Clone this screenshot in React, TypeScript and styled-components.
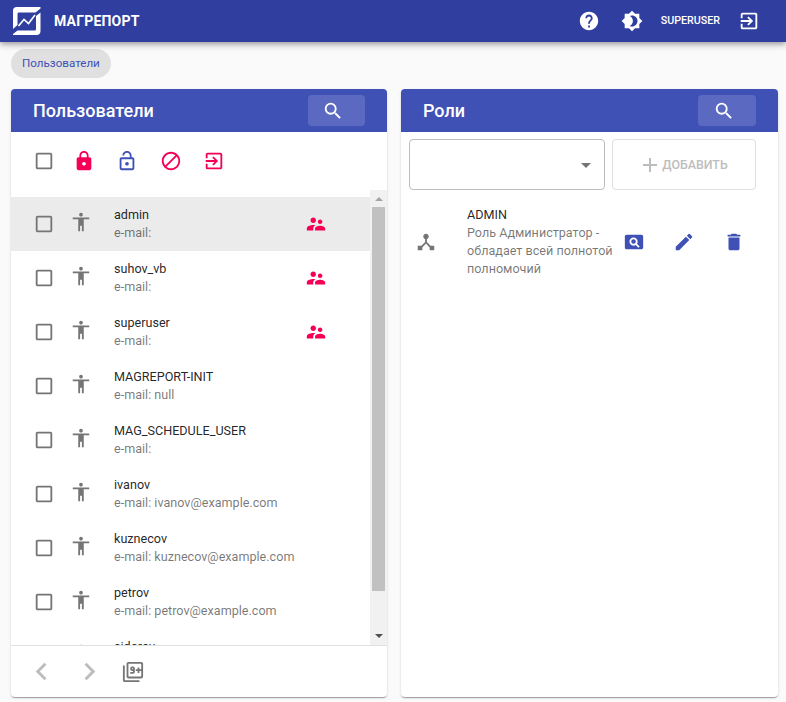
import React from "react";
import styled, { createGlobalStyle } from "styled-components";
import {
  MdAccessibility,
  MdAdd,
  MdArrowDropDown,
  MdBlock,
  MdBrightness4,
  MdCheckBoxOutlineBlank,
  MdDelete,
  MdDeviceHub,
  MdEdit,
  MdExitToApp,
  MdFilter9Plus,
  MdHelp,
  MdLock,
  MdLockOpen,
  MdNavigateBefore,
  MdNavigateNext,
  MdPageview,
  MdSearch,
  MdSupervisorAccount,
} from "react-icons/md";

const users = [
  { name: "admin", email: "", supervisor: true, selected: true },
  { name: "suhov_vb", email: "", supervisor: true },
  { name: "superuser", email: "", supervisor: true },
  { name: "MAGREPORT-INIT", email: "null" },
  { name: "MAG_SCHEDULE_USER", email: "" },
  { name: "ivanov", email: "ivanov@example.com" },
  { name: "kuznecov", email: "kuznecov@example.com" },
  { name: "petrov", email: "petrov@example.com" },
  { name: "sidorov", email: "sidorov@example.com" },
];

export default function App() {
  return (
    <Page>
      <GlobalStyle />
      <AppBar>
        <Logo viewBox="0 0 28 28" fill="none">
          <path d="M0 3.5C0 1.5 1.5 0 3.5 0H27.5V1.5L22.5 5.5H6C5 5.5 4.5 6 4.5 7V18L0 22Z" fill="#fff" />
          <path d="M0 28V27L4.5 23.5H21.5C22.5 23.5 23 23 23 22V9L27.5 5.5V24C27.5 26.5 26 28 23.5 28Z" fill="#fff" />
          <path d="M5.5 19L11 12.5L15.5 16.5L22 8" stroke="#fff" strokeWidth="1.6" />
        </Logo>
        <Brand>МАГРЕПОРТ</Brand>
        <Spacer />
        <BarIcons>
          <MdHelp size={22} />
          <MdBrightness4 size={22} />
          <UserName>SUPERUSER</UserName>
          <MdExitToApp size={22} />
        </BarIcons>
      </AppBar>

      <Crumbs>
        <Chip>Пользователи</Chip>
      </Crumbs>

      <Columns>
        <Panel>
          <PanelHead>
            <PanelTitle>Пользователи</PanelTitle>
            <SearchButton $width={57}>
              <MdSearch size={22} />
            </SearchButton>
          </PanelHead>
          <Toolbar>
            <SelectAll $color="#757575"><MdCheckBoxOutlineBlank size={22} /></SelectAll>
            <Tool $color="#f50057"><MdLock size={22} /></Tool>
            <Tool $color="#3f51b5"><MdLockOpen size={22} /></Tool>
            <Tool $color="#f50057"><MdBlock size={22} /></Tool>
            <Tool $color="#f50057"><MdExitToApp size={22} /></Tool>
          </Toolbar>
          <ListArea>
            <UserList>
              {users.map((user) => (
                <UserRow key={user.name} $selected={user.selected}>
                  <CheckCell><MdCheckBoxOutlineBlank size={22} /></CheckCell>
                  <PersonCell><MdAccessibility size={22} /></PersonCell>
                  <UserText>
                    <Primary>{user.name}</Primary>
                    <Secondary>e-mail: {user.email}</Secondary>
                  </UserText>
                  {user.supervisor && (
                    <RoleMark><MdSupervisorAccount size={22} /></RoleMark>
                  )}
                </UserRow>
              ))}
            </UserList>
            <ScrollBar>
              <ArrowUp />
              <ScrollTrack>
                <ScrollThumb />
              </ScrollTrack>
              <ArrowDown />
            </ScrollBar>
          </ListArea>
          <Footer>
            <Pager><MdNavigateBefore size={35} /></Pager>
            <Pager><MdNavigateNext size={35} /></Pager>
            <PageSize><MdFilter9Plus size={22} /></PageSize>
          </Footer>
        </Panel>

        <Panel>
          <PanelHead>
            <PanelTitle>Роли</PanelTitle>
            <SearchButton $width={58}>
              <MdSearch size={22} />
            </SearchButton>
          </PanelHead>
          <RoleForm>
            <RoleSelect>
              <MdArrowDropDown size={24} />
            </RoleSelect>
            <AddButton>
              <MdAdd size={24} />
              ДОБАВИТЬ
            </AddButton>
          </RoleForm>
          <RoleRow>
            <RoleIcon><MdDeviceHub size={22} /></RoleIcon>
            <RoleText>
              <Primary>ADMIN</Primary>
              <Secondary>Роль Администратор - обладает всей полнотой полномочий</Secondary>
            </RoleText>
            <RoleActions>
              <MdPageview size={22} />
              <MdEdit size={22} />
              <MdDelete size={22} />
            </RoleActions>
          </RoleRow>
        </Panel>
      </Columns>
    </Page>
  );
}

const GlobalStyle = createGlobalStyle`
  html, body {
    margin: 0;
    height: 100%;
    background: #fafafa;
    font-family: Roboto, "Liberation Sans", sans-serif;
  }
  svg {
    display: block;
  }
`;

const Page = styled.div`
  width: 786px;
  height: 702px;
  display: flex;
  flex-direction: column;
  overflow: hidden;
`;

const AppBar = styled.header`
  height: 42px;
  flex: none;
  display: flex;
  align-items: center;
  padding: 0 26px 0 13px;
  background: #303f9f;
  color: #fff;
  box-shadow: 0 2px 4px -1px rgba(0, 0, 0, 0.2), 0 4px 5px 0 rgba(0, 0, 0, 0.14),
    0 1px 10px 0 rgba(0, 0, 0, 0.12);
  position: relative;
  z-index: 1;
`;

const Logo = styled.svg`
  width: 28px;
  height: 28px;
  margin-right: 13px;
`;

const Brand = styled.div`
  font-size: 14px;
  font-weight: 700;
  letter-spacing: 0.2px;
`;

const Spacer = styled.div`
  flex: 1;
`;

const BarIcons = styled.div`
  display: flex;
  align-items: center;
  gap: 21px;
`;

const UserName = styled.span`
  font-size: 10.7px;
  font-weight: 500;
  margin: 0 -3px 2px -3px;
`;

const Crumbs = styled.nav`
  height: 40px;
  flex: none;
  display: flex;
  align-items: flex-start;
  padding: 7px 11px 0;
`;

const Chip = styled.div`
  height: 29px;
  box-sizing: border-box;
  display: flex;
  align-items: center;
  padding: 0 11px 2px;
  border-radius: 15px;
  background: #e0e0e0;
  color: #3f51b5;
  font-size: 11.6px;
`;

const Columns = styled.main`
  flex: 1;
  min-height: 0;
  display: grid;
  grid-template-columns: 376px 377px;
  gap: 14px;
  padding: 0 8px 5px 11px;
`;

const Panel = styled.section`
  display: flex;
  flex-direction: column;
  min-height: 0;
  background: #fff;
  border-radius: 4px;
  overflow: hidden;
  box-shadow: 0 2px 1px -1px rgba(0, 0, 0, 0.2), 0 1px 1px 0 rgba(0, 0, 0, 0.14),
    0 1px 3px 0 rgba(0, 0, 0, 0.12);
`;

const PanelHead = styled.div`
  height: 43px;
  flex: none;
  display: flex;
  align-items: center;
  justify-content: space-between;
  padding: 0 22px;
  background: #3f51b5;
  color: #fff;
`;

const PanelTitle = styled.h2`
  margin: 0;
  font-size: 18px;
  font-weight: 500;
`;

const SearchButton = styled.div<{ $width: number }>`
  width: ${(p) => p.$width}px;
  height: 31px;
  box-sizing: border-box;
  display: flex;
  align-items: center;
  justify-content: center;
  padding-right: 7px;
  border-radius: 4px;
  background: rgba(255, 255, 255, 0.15);
`;

const Toolbar = styled.div`
  height: 58px;
  flex: none;
  display: flex;
  align-items: center;
  padding: 0 0 0 22px;
  gap: 21.3px;
`;

const Tool = styled.div<{ $color: string }>`
  color: ${(p) => p.$color};
`;

const SelectAll = styled(Tool)`
  margin-right: -3.4px;
`;

const ListArea = styled.div`
  flex: 1;
  min-height: 0;
  display: flex;
`;

const UserList = styled.div`
  flex: 1;
  min-width: 0;
  overflow: hidden;
  padding-top: 7px;
`;

const UserRow = styled.div<{ $selected?: boolean }>`
  height: 54px;
  display: flex;
  align-items: center;
  position: relative;
  background: ${(p) => (p.$selected ? "#ebebeb" : "transparent")};
`;

const CheckCell = styled.div`
  width: 22px;
  margin-left: 22px;
  color: #757575;
`;

const PersonCell = styled.div`
  width: 22px;
  margin: 0 0 5px 15px;
  color: #757575;
`;

const UserText = styled.div`
  margin-left: 22px;
  min-width: 0;
`;

const Primary = styled.div`
  font-size: 12.6px;
  line-height: 18px;
  color: rgba(0, 0, 0, 0.87);
`;

const Secondary = styled.div`
  font-size: 12.6px;
  line-height: 18px;
  color: rgba(0, 0, 0, 0.54);
`;

const RoleMark = styled.div`
  position: absolute;
  left: 294px;
  top: 16px;
  color: #f50057;
`;

const ScrollBar = styled.div`
  width: 17px;
  flex: none;
  display: flex;
  flex-direction: column;
  align-items: center;
  background: #f1f1f1;
`;

const ArrowUp = styled.div`
  height: 11px;
  flex: none;
  width: 0;
  box-sizing: border-box;
  margin-bottom: 6px;
  border-left: 4px solid transparent;
  border-right: 4px solid transparent;
  border-bottom: 4px solid #a3a3a3;
  border-top: 7px solid transparent;
`;

const ArrowDown = styled.div`
  height: 11px;
  flex: none;
  width: 0;
  box-sizing: border-box;
  margin-top: 6px;
  border-left: 4px solid transparent;
  border-right: 4px solid transparent;
  border-top: 4px solid #505050;
  border-bottom: 7px solid transparent;
`;

const ScrollTrack = styled.div`
  flex: 1;
  width: 100%;
  display: flex;
  justify-content: center;
`;

const ScrollThumb = styled.div`
  width: 13px;
  height: 384px;
  background: #c1c1c1;
`;

const Footer = styled.div`
  height: 51px;
  flex: none;
  display: flex;
  align-items: center;
  padding-left: 13px;
  gap: 13px;
  border-top: 1px solid #e0e0e0;
`;

const Pager = styled.div`
  color: #bdbdbd;
`;

const PageSize = styled.div`
  margin-left: 2px;
  color: #757575;
`;

const RoleForm = styled.div`
  flex: none;
  display: flex;
  gap: 7px;
  padding: 7px 0 0 8px;
`;

const RoleSelect = styled.div`
  width: 196px;
  height: 51px;
  box-sizing: border-box;
  display: flex;
  align-items: center;
  justify-content: flex-end;
  padding-right: 6px;
  border: 1px solid #bdbdbd;
  border-radius: 4px;
  color: #757575;
`;

const AddButton = styled.div`
  width: 144px;
  height: 51px;
  box-sizing: border-box;
  display: flex;
  align-items: center;
  justify-content: center;
  padding-right: 2px;
  border: 1px solid #e0e0e0;
  border-radius: 4px;
  color: #bdbdbd;
  font-size: 12.4px;
  font-weight: 500;
`;

const RoleRow = styled.div`
  display: flex;
  align-items: center;
  padding: 16px 0 0 14px;
`;

const RoleIcon = styled.div`
  width: 22px;
  color: #757575;
`;

const RoleText = styled.div`
  width: 150px;
  margin-left: 30px;
  flex: none;
`;

const RoleActions = styled.div`
  display: flex;
  gap: 28.4px;
  margin: 0 0 0 5.5px;
  color: #3f51b5;
`;
